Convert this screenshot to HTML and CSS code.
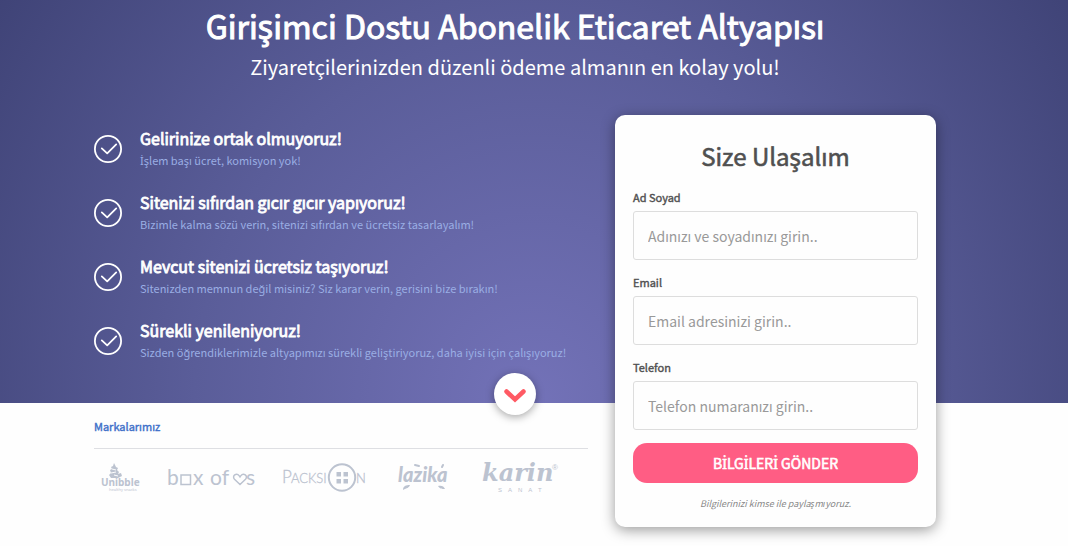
FILE: index.html
```html
<!DOCTYPE html>
<html lang="tr">
<head>
<meta charset="UTF-8">
<title>Girişimci Dostu Abonelik Eticaret Altyapısı</title>
<meta name="viewport" content="width=device-width,initial-scale=1">
<link rel="stylesheet" href="styles.css">
</head>
<body>
<svg width="0" height="0" class="sprite" aria-hidden="true">
  <symbol id="check" viewBox="0 0 28 28">
    <circle cx="14" cy="14" r="13.1"/>
    <path d="M7.8 13.4l5.4 5 9-9"/>
  </symbol>
</svg>

<section class="hero">
  <div class="container">
    <h1>Girişimci Dostu Abonelik Eticaret Altyapısı</h1>
    <p class="lead">Ziyaretçilerinizden düzenli ödeme almanın en kolay yolu!</p>
    <div class="columns">
      <ul class="features">
        <li>
          <svg class="check"><use href="#check"/></svg>
          <div><h3>Gelirinize ortak olmuyoruz!</h3><p><span class="dotted">İ</span>şlem başı ücret, komisyon yok!</p></div>
        </li>
        <li>
          <svg class="check"><use href="#check"/></svg>
          <div><h3>Sitenizi sıfırdan gıcır gıcır yapıyoruz!</h3><p>Bizimle kalma sözü verin, sitenizi sıfırdan ve ücretsiz tasarlayalım!</p></div>
        </li>
        <li>
          <svg class="check"><use href="#check"/></svg>
          <div><h3>Mevcut sitenizi ücretsiz taşıyoruz!</h3><p>Sitenizden memnun değil misiniz? Siz karar verin, gerisini bize bırakın!</p></div>
        </li>
        <li>
          <svg class="check"><use href="#check"/></svg>
          <div><h3>Sürekli yenileniyoruz!</h3><p>Sizden öğrendiklerimizle altyapımızı sürekli geliştiriyoruz, daha iyisi için çalışıyoruz!</p></div>
        </li>
      </ul>
      <form class="card">
        <h2>Size Ulaşalım</h2>
        <div class="field">
          <label for="name">Ad Soyad</label>
          <input type="text" id="name" placeholder="Adınızı ve soyadınızı girin..">
        </div>
        <div class="field">
          <label for="email">Email</label>
          <input type="email" id="email" placeholder="Email adresinizi girin..">
        </div>
        <div class="field">
          <label for="phone">Telefon</label>
          <input type="tel" id="phone" placeholder="Telefon numaranızı girin..">
        </div>
        <button type="submit" class="submit">B<span class="dotted">İ</span>LG<span class="dotted">İ</span>LER<span class="dotted">İ</span> GÖNDER</button>
        <p class="note">Bilgilerinizi kimse ile paylaşmıyoruz.</p>
      </form>
    </div>
    <a class="scroll-down" href="#brands" aria-label="Markalarımız">
      <svg viewBox="0 0 22 14"><path d="M2.5 2.5L11 10.5l8.5-8"/></svg>
    </a>
  </div>
</section>

<section class="brands" id="brands">
  <div class="container">
    <div class="brands-inner">
      <h4>Markalarımız</h4>
      <div class="logos">
        <svg width="40" height="32" viewBox="0 0 40 32" role="img" aria-label="Unibble">
          <path d="M13 1l2 4 2 1-1 2 2 2-1 2 3-1 1 3-4 2h-7l-2-3 2-2-1-3 2-1-1-2 2-1z"/>
          <path class="cut" d="M11 7l4 1M10 11l5-1M13 13l4 1"/>
          <text class="unibble" x="0" y="24">Unibble</text>
          <text class="tiny" x="8" y="29">healthy snacks</text>
        </svg>
        <svg width="88" height="32" viewBox="0 0 88 32" role="img" aria-label="box of us">
          <text class="box" x="-1" y="23">b</text>
          <rect class="line" x="13" y="13" width="9.5" height="9.5"/>
          <text class="box" x="25" y="23">x</text>
          <text class="box" x="42" y="23">of</text>
          <path class="line" d="M72 22.5l-5.500-5.200c-3-3.400 2-7.200 4.800-3.400l.7 1 .7-1c2.800-3.800 7.800 0 4.800 3.400z"/>
          <text class="box" x="78" y="23">s</text>
        </svg>
        <svg width="88" height="32" viewBox="0 0 88 32" role="img" aria-label="Packsion">
          <text class="packs" x="-1" y="21">P</text>
          <text class="packs small" x="8" y="21">ACKSI</text>
          <circle class="ring" cx="59" cy="15.5" r="13.2"/>
          <path d="M53.5 10H58v4.500h-4.500zM60.500 10H65v4.500h-4.500zM53.500 17H58v4.500h-4.500zM60.500 17H65v4.500h-4.500z"/>
          <text class="packs small" x="73" y="21">N</text>
        </svg>
        <svg width="57" height="32" viewBox="0 0 57 32" role="img" aria-label="lazika">
          <text class="lazika" x="0" y="20">lazika</text>
          <path class="stroke" d="M17 3l4 1M44 5l1-2"/>
          <path d="M5 28c0-4 3-5 7-5-1 3-3 3-7 5zM40 24c3-1 6 0 7 3-3 0-5 0-7-3z"/>
        </svg>
        <svg width="76" height="32" viewBox="0 0 76 32" role="img" aria-label="karin sanat">
          <text class="karin" x="0" y="19">karin</text>
          <text class="reg" x="70" y="8">®</text>
          <text class="sanat" x="16" y="30">SANAT</text>
        </svg>
      </div>
    </div>
  </div>
</section>
</body>
</html>
```
FILE: styles.css
```css
:root {
  --accent:#ff5d84;
  --logo:#bcc3d0;
  --font-stack:"Noto Sans CJK SC","Noto Sans",sans-serif;
}
*{box-sizing:border-box;}
body{margin:0;background:#fefefe;font-family:var(--font-stack);color:#505050;}
h1,h2,h3,h4,p,ul{margin:0;padding:0;font-weight:400;}
.sprite{position:absolute;}
/* capital dotted I is missing in the main font */
.dotted{font-family:"Noto Sans",sans-serif;}
.hero,.brands{padding-right:38px;}
.container{max-width:842px;margin:0 auto;position:relative;}

.hero{background:radial-gradient(ellipse 680px 740px at 50% 100%,#7372b8,#5a5d99 50%,#3d4174);}
h1{padding-top:3px;font-size:32px;line-height:44px;text-align:center;color:#fff;-webkit-text-stroke:1px #fff;}
.lead{font-size:20px;line-height:40px;text-align:center;color:#fff;}
.columns{display:flex;align-items:flex-start;justify-content:space-between;padding-top:28px;}

.features{list-style:none;padding-top:12px;}
.features li{display:flex;gap:18px;height:64px;}
.check{width:28px;height:28px;margin-top:8px;flex:none;fill:none;stroke:#fff;stroke-width:1.8;stroke-linecap:round;stroke-linejoin:round;}
.features h3{font-size:16px;line-height:22px;color:#fff;-webkit-text-stroke:.8px #fff;}
.features p{font-size:11px;line-height:22px;color:#9aaee4;}

.card{width:321px;margin-bottom:-124px;padding:24px 18px 15px;background:#fefefe;border-radius:10px;box-shadow:0 3px 14px rgba(0,0,0,0.4);position:relative;}
.card h2{font-size:24px;line-height:34px;text-align:center;-webkit-text-stroke:.6px #505050;margin-bottom:15px;}
.field{margin-bottom:13px;}
.field label{display:block;font-size:11px;line-height:18px;margin-bottom:5px;-webkit-text-stroke:.4px #505050;}
.field input{display:block;width:100%;height:49px;padding:0 14px;border:1px solid #ddd;border-radius:3px;background:#fefefe;font:14px var(--font-stack);color:#505050;}
.field input::placeholder{color:#999;}
.submit{display:block;width:100%;height:40px;border:0;border-radius:14px;background:var(--accent);color:#fff;font:14px var(--font-stack);-webkit-text-stroke:.6px #fff;cursor:pointer;}
.note{margin-top:13px;font-size:9px;line-height:16px;font-style:italic;text-align:center;color:#888;}

.scroll-down{position:absolute;left:50%;bottom:-12px;width:42px;height:42px;margin-left:-21px;display:flex;align-items:center;justify-content:center;border-radius:50%;background:#fff;box-shadow:0 2px 8px rgba(0,0,0,0.35);}
.scroll-down svg{width:22px;height:14px;margin-top:4px;fill:none;stroke:#ff5a64;stroke-width:4.5;stroke-linecap:round;}

.brands{padding-bottom:54px;}
.brands-inner{max-width:494px;}
.brands h4{padding:14px 0 13px;font-size:11px;line-height:18px;color:#3e70c9;-webkit-text-stroke:.4px #3e70c9;border-bottom:1px solid #dedfe3;}
.logos{display:flex;align-items:center;gap:27px;padding:13px 0 0 7px;}
.logos svg{fill:var(--logo);overflow:visible;}
.logos .line,.logos .ring,.logos .stroke,.logos .cut{fill:none;stroke:var(--logo);stroke-width:1.5;}
.logos .ring{stroke-width:2;}
.logos .stroke{stroke-width:2;stroke-linecap:round;}
.logos .cut{stroke:#fefefe;stroke-width:1;}
.unibble{font:700 10px "Noto Sans",sans-serif;}
.tiny{font:4px "Noto Sans",sans-serif;}
.box{font:400 21px Lato,sans-serif;}
.packs{font:300 17px Lato,sans-serif;stroke:var(--logo);stroke-width:.3;}
.packs.small{font-size:13px;}
.lazika{font:italic 900 20px Lato,sans-serif;}
.karin{font:italic 700 24px "DejaVu Serif",serif;}
.reg{font:8px "Liberation Sans",sans-serif;}
.sanat{font:6px "Liberation Sans",sans-serif;letter-spacing:6px;}
```
